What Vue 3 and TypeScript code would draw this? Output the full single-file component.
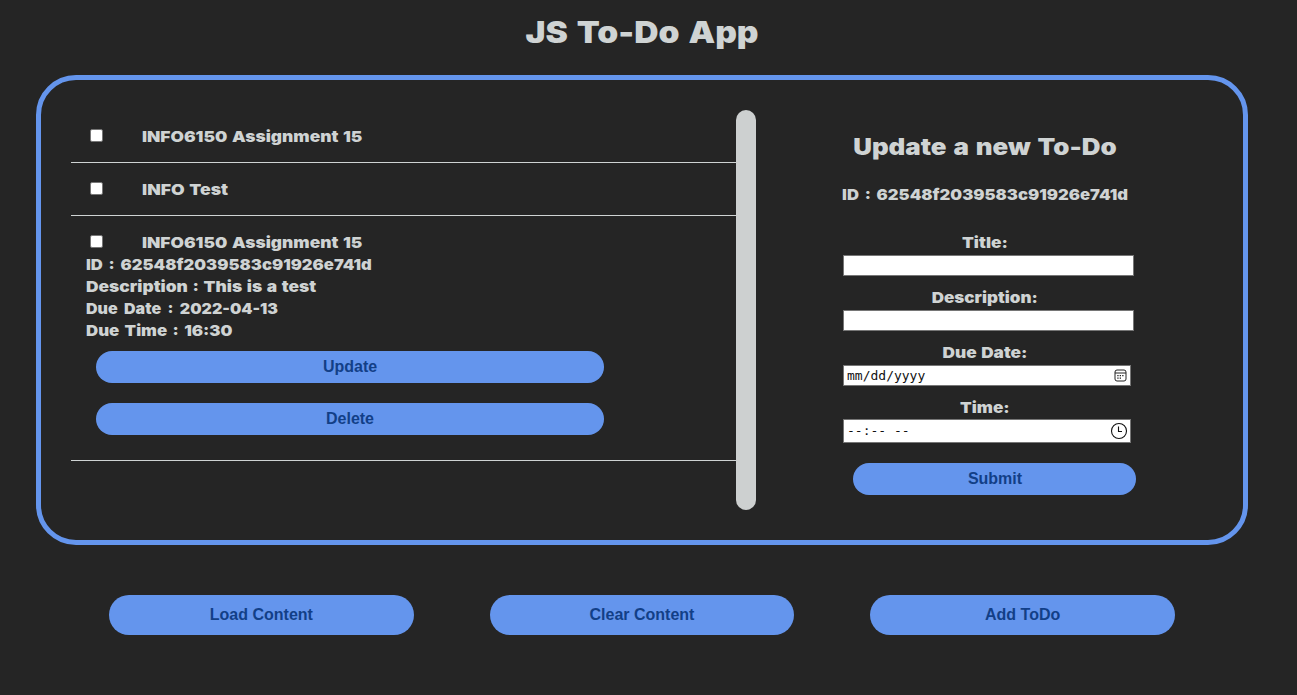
<script setup lang="ts">
import { ref } from 'vue'

interface Todo {
  key: number
  title: string
  kind: string
  details?: { name: string; text: string }[]
}

const todos = ref<Todo[]>([
  { key: 1, title: 'INFO6150 Assignment 15', kind: 'assignment' },
  { key: 2, title: 'INFO Test', kind: 'test' },
  {
    key: 3,
    title: 'INFO6150 Assignment 15',
    kind: 'assignment',
    details: [
      { name: 'id', text: 'ID : 62548f2039583c91926e741d' },
      { name: 'desc', text: 'Description : This is a test' },
      { name: 'date', text: 'Due Date : 2022-04-13' },
      { name: 'time', text: 'Due Time : 16:30' },
    ],
  },
])
const actions = ['Load Content', 'Clear Content', 'Add ToDo']
</script>

<template>
  <div class="app">
    <h1><span>JS To-Do App</span></h1>
    <main class="card">
      <section class="list">
        <article v-for="t in todos" :key="t.key" class="todo">
          <div class="row">
            <input type="checkbox" class="check" />
            <span :class="'t-' + t.kind">{{ t.title }}</span>
          </div>
          <template v-if="t.details">
            <div v-for="d in t.details" :key="d.name" class="row">
              <span :class="'t-' + d.name">{{ d.text }}</span>
            </div>
            <button class="btn wide">Update</button>
            <button class="btn wide">Delete</button>
          </template>
        </article>
      </section>
      <div class="divider"></div>
      <form class="form" @submit.prevent>
        <h2><span>Update a new To-Do</span></h2>
        <p class="form-id"><span class="t-id">ID : 62548f2039583c91926e741d</span></p>
        <label class="l-title">Title:</label>
        <input type="text" class="field" />
        <label class="l-desc">Description:</label>
        <input type="text" class="field" />
        <label class="l-date">Due Date:</label>
        <div class="field date">
          <span>mm/dd/yyyy</span>
          <svg width="13" height="13" viewBox="0 0 13 13" fill="none" stroke="#222">
            <rect x="1" y="1" width="11" height="11" rx="2" />
            <path d="M1 4H12" />
            <path d="M5.7 6.6h1.3M8.2 6.6h1.3M3.3 6.6h1.3M3.3 9.1h1.3M5.7 9.1h1.3" stroke-width="1.3" />
          </svg>
        </div>
        <label class="l-time">Time:</label>
        <div class="field time">
          <span>--:-- --</span>
          <svg width="18" height="18" viewBox="0 0 18 18" fill="none" stroke="#111" stroke-width="1.1">
            <circle cx="9" cy="9" r="7.5" />
            <path d="M8.5 4.5V9.5H12" />
          </svg>
        </div>
        <button class="btn submit">Submit</button>
      </form>
    </main>
    <footer class="actions">
      <button v-for="a in actions" :key="a" class="btn big">{{ a }}</button>
    </footer>
  </div>
</template>

<style>
body {
  margin: 0;
  background: #252525;
}
</style>

<style scoped>
.app {
  width: 1284px;
  height: 695px;
  box-sizing: border-box;
  overflow: hidden;
  color: #cfd3d3;
  font: 900 15px/22px Inter, Roboto, sans-serif;
  word-spacing: 1px;
  white-space: nowrap;
}
h1 {
  margin: 0;
  padding-top: 12px;
  height: 63px;
  font-size: 30px;
  line-height: 40px;
  font-weight: 900;
  text-align: center;
  word-spacing: 2px;
}
h1 span {
  display: inline-block;
  transform: scaleX(1.12);
}
.card {
  box-sizing: border-box;
  display: flex;
  width: 1212px;
  height: 470px;
  margin: 0 36px;
  padding: 30px;
  border: 5px solid #6495ed;
  border-radius: 40px;
}
.list {
  width: 665px;
}
.todo {
  padding: 15px;
  border-bottom: 1px solid #cfd3d3;
}
.row {
  display: flex;
  height: 22px;
}
.row span {
  padding-top: 1px;
  transform-origin: left;
}
.t-assignment {
  transform: scaleX(1.155);
}
.t-test {
  transform: scaleX(1.175);
}
.t-id {
  word-spacing: 2.2px;
  transform: scaleX(1.108);
}
.t-desc {
  transform: scaleX(1.158);
}
.t-date {
  word-spacing: 3px;
  transform: scaleX(1.067);
}
.t-time {
  word-spacing: 1.8px;
  transform: scaleX(1.12);
}
.check {
  appearance: none;
  width: 13px;
  height: 13px;
  margin: 4px 38.5px 0 4px;
  background: #fff;
  border: 1px solid #767676;
  border-radius: 2px;
}
.btn {
  display: block;
  padding: 0;
  border: 0;
  background: #6495ed;
  color: #123f87;
  font: bold 16px "Liberation Sans", Arial, sans-serif;
  word-spacing: 0;
}
.wide {
  width: 508px;
  height: 32px;
  margin: 10px 10px 20px;
  border-radius: 16px;
}
.wide + .wide {
  margin-bottom: 10px;
}
.divider {
  width: 20px;
  height: 400px;
  border-radius: 10px;
  background: #cdd0d0;
}
.form {
  display: flex;
  flex-direction: column;
  width: 284px;
  margin-left: 87px;
}
h2 {
  display: flex;
  justify-content: center;
  margin: 22px 0;
  font-size: 22.6px;
  line-height: 30px;
  font-weight: 900;
  word-spacing: 1.5px;
}
h2 span {
  transform: scaleX(1.146);
}
.form-id {
  display: flex;
  justify-content: center;
  margin: 0 0 15px;
}
label {
  align-self: center;
  margin: 11px 0 1px;
}
.l-title {
  transform: scaleX(1.15);
}
.l-desc {
  transform: scaleX(1.134);
}
.l-date {
  transform: scaleX(1.149);
}
.field {
  box-sizing: border-box;
  flex: none;
  width: 291px;
  height: 21px;
  padding: 1px 3px;
  border: 1px solid #767676;
  border-radius: 0;
  background: #fff;
  color: #111;
}
.date,
.time {
  display: flex;
  align-items: center;
  justify-content: space-between;
  width: 288px;
  font: 400 13px "DejaVu Sans Mono", "Liberation Mono", monospace;
  word-spacing: 0;
}
.time {
  height: 24px;
  padding-right: 2px;
}
.time span {
  padding-bottom: 2px;
}
.l-time {
  margin-bottom: 0;
  transform: scaleX(1.14);
}
.submit {
  width: 283px;
  height: 32px;
  flex: none;
  margin: 20px 0 0 10px;
  padding-left: 1px;
  border-radius: 16px;
}
.actions {
  display: flex;
  justify-content: space-between;
  margin: 50px 109px 0;
}
.big {
  width: 304.7px;
  height: 40px;
  border-radius: 20px;
}
</style>
